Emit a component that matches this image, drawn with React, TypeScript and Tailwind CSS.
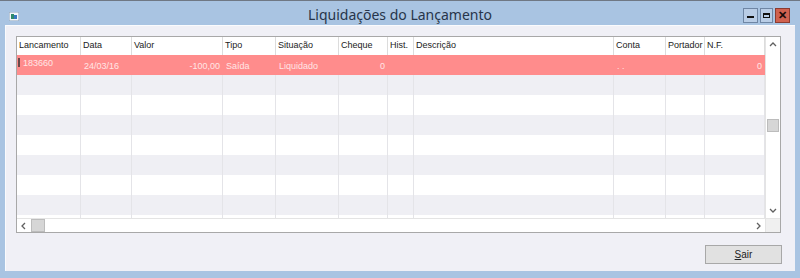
import React from "react";

const cols = [
  { name: "Lancamento", w: "w-[64px]" },
  { name: "Data", w: "w-[51px]" },
  { name: "Valor", w: "w-[91px]" },
  { name: "Tipo", w: "w-[53px]" },
  { name: "Situação", w: "w-[63px]" },
  { name: "Cheque", w: "w-[49px]" },
  { name: "Hist.", w: "w-[26px]" },
  { name: "Descrição", w: "w-[200px]" },
  { name: "Conta", w: "w-[52px]" },
  { name: "Portador", w: "w-[39px]" },
  { name: "N.F.", w: "w-[60px]" },
];

const row = [
  { v: "183660", align: "left" },
  { v: "24/03/16", align: "left" },
  { v: "-100,00", align: "right" },
  { v: "Saída", align: "left" },
  { v: "Liquidado", align: "left" },
  { v: "0", align: "right" },
  { v: "", align: "left" },
  { v: "", align: "left" },
  { v: ". .", align: "left" },
  { v: "", align: "left" },
  { v: "0", align: "right" },
];

function Chevron({ dir }: { dir: "up" | "down" | "left" | "right" }) {
  const d = {
    up: "M2 6 L5 3 L8 6",
    down: "M2 4 L5 7 L8 4",
    left: "M6 2 L3 5 L6 8",
    right: "M4 2 L7 5 L4 8",
  }[dir];
  return (
    <svg width="10" height="10" viewBox="0 0 10 10">
      <path d={d} fill="none" stroke="#606060" strokeWidth="1.3" />
    </svg>
  );
}

export default function App() {
  const empty = Array.from({ length: 8 });

  return (
    <div
      className="w-[800px] h-[278px] bg-[#a9c4e2] border-t border-[#6f7884] flex flex-col overflow-hidden"
      style={{ fontFamily: '"Liberation Sans", Arial, sans-serif' }}
    >
      {/* TITLE BAR */}
      <div className="h-[24px] relative flex items-center">
        <div className="absolute left-[9px] top-[11px]">
          <svg width="10" height="9" viewBox="0 0 10 9">
            <rect x="0" y="0" width="10" height="9" fill="#f4f7fb" stroke="#8aa0b8" strokeWidth="1" />
            <rect x="2" y="2" width="3" height="5" fill="#2f8a6a" />
            <rect x="5" y="3" width="3" height="4" fill="#3a78c0" />
          </svg>
        </div>
        <div
          className="w-full text-center text-[14px] text-[#27354a] pt-[2px]"
          style={{ fontFamily: '"Noto Sans", "Open Sans", sans-serif' }}
        >
          Liquidações do Lançamento
        </div>
        <div className="absolute right-[10px] top-[7px] flex gap-[2px]">
          <div className="w-[15px] h-[15px] border border-[#6f86a4] bg-[#b9cde6] flex items-end justify-center pb-[4px]">
            <div className="w-[7px] h-[2px] bg-[#111]" />
          </div>
          <div className="w-[13px] h-[15px] border border-[#6f86a4] bg-[#b9cde6] flex items-center justify-center">
            <div className="w-[7px] h-[5px] border border-[#111] border-t-[2px]" />
          </div>
          <div className="w-[15px] h-[15px] border border-[#8c3b30] bg-[#d0614f] flex items-center justify-center text-[#1a0a08] text-[11px] font-bold leading-none">
            ✕
          </div>
        </div>
      </div>

      {/* CLIENT */}
      <div className="flex-1 mx-[5px] mb-[7px] bg-[#f0f0f6] border-t border-l border-[#fafbfd] flex flex-col pl-[10px] pr-[12px] pt-[10px]">
        {/* GRID */}
        <div className="w-[765px] h-[197px] border border-[#a8a8a8] bg-white flex flex-col text-[9px]">
          <div className="flex h-[181px]">
            <div className="w-[748px] overflow-hidden">
              {/* header */}
              <div className="flex h-[18px] bg-white">
                {cols.map((c, i) => (
                  <div
                    key={i}
                    className={`${c.w} shrink-0 border-r border-[#dcdcdc] px-[2px] flex items-center text-[#222] overflow-hidden whitespace-nowrap`}
                  >
                    {c.name}
                  </div>
                ))}
              </div>

              {/* highlighted row */}
              <div className="flex h-[20px] bg-[#ff8c8c] text-[#ffe6e6]">
                {cols.map((c, i) => (
                  <div
                    key={i}
                    className={`${c.w} shrink-0 px-[3px] flex overflow-hidden whitespace-nowrap ${
                      i === 0 ? "items-start pt-[2px] pl-[1px] gap-[3px]" : "items-center pt-[4px]"
                    } ${row[i].align === "right" ? "justify-end" : ""}`}
                  >
                    {i === 0 && <span className="w-[2px] h-[9px] mt-[1px] bg-[#6a4a4a] inline-block" />}
                    {row[i].v}
                  </div>
                ))}
              </div>

              {/* empty rows */}
              {empty.map((_, r) => (
                <div key={r} className={`flex h-[20px] ${r % 2 === 0 ? "bg-[#efeff4]" : "bg-white"}`}>
                  {cols.map((c, i) => (
                    <div key={i} className={`${c.w} shrink-0 border-r border-[#e4e4e8]`} />
                  ))}
                </div>
              ))}
            </div>

            {/* vertical scrollbar */}
            <div className="w-[15px] border-l border-[#e4e4e4] bg-white flex flex-col">
              <div className="h-[16px] flex items-center justify-center">
                <Chevron dir="up" />
              </div>
              <div className="h-[66px]" />
              <div className="h-[13px] mx-[1px] bg-[#d6d6d6] border border-[#bcbcbc]" />
              <div className="flex-1" />
              <div className="h-[16px] flex items-center justify-center">
                <Chevron dir="down" />
              </div>
            </div>
          </div>

          {/* horizontal scrollbar */}
          <div className="flex h-[14px] border-t border-[#e4e4e4]">
            <div className="w-[748px] flex bg-white">
              <div className="w-[14px] flex items-center justify-center">
                <Chevron dir="left" />
              </div>
              <div className="w-[14px] bg-[#d6d6d6] border border-[#bcbcbc]" />
              <div className="flex-1" />
              <div className="w-[14px] flex items-center justify-center">
                <Chevron dir="right" />
              </div>
            </div>
            <div className="w-[15px] bg-[#f0f0f0] border-l border-[#e4e4e4]" />
          </div>
        </div>

        {/* BUTTON */}
        <div className="flex justify-end mt-[12px] pr-[1px]">
          <button className="w-[77px] h-[19px] bg-[#e1e1e1] border border-[#a8a8a8] text-[10px] text-[#222] flex items-center justify-center">
            <span className="underline">S</span>air
          </button>
        </div>
      </div>
    </div>
  );
}
